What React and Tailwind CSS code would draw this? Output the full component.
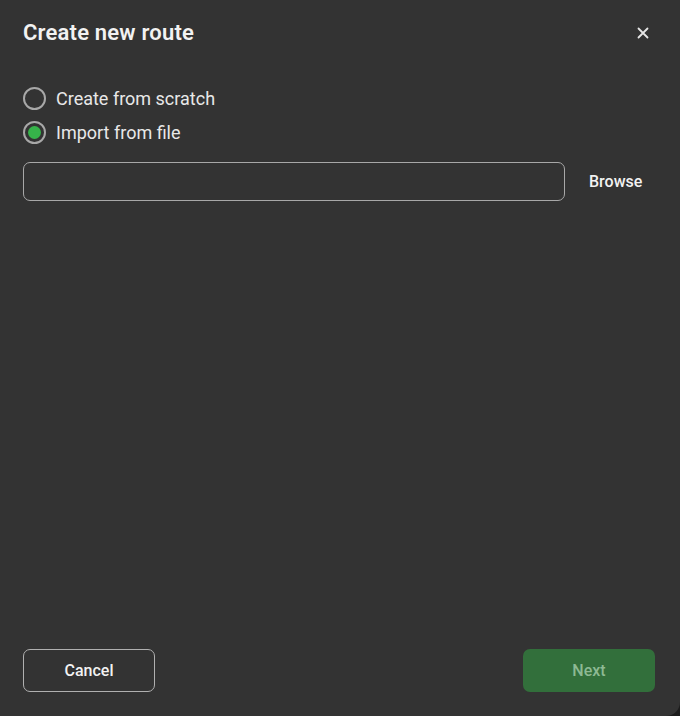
import { useState } from 'react'

export default function App() {
  const [mode, setMode] = useState('file')
  const [path, setPath] = useState('')

  const options = [
    { id: 'scratch', label: 'Create from scratch' },
    { id: 'file', label: 'Import from file' },
  ]

  return (
    <div className="w-[680px] h-[716px] bg-[#1c1c1c]" style={{ fontFamily: 'Roboto, "Liberation Sans", sans-serif' }}>
      <div className="w-full h-full bg-[#333333] rounded-br-[14px] flex flex-col pl-[23px] pr-[25px] pt-[20px] pb-[24px] text-white">
        {/* Header */}
        <div className="flex items-center justify-between h-[24px]">
          <h1 className="text-[22px] font-semibold tracking-[0.2px] text-[#f2f2f2]">Create new route</h1>
          <button className="w-[16px] h-[16px] mr-[4px] mt-[2px] flex items-center justify-center text-[#e6e6e6]">
            <svg width="12" height="12" viewBox="0 0 12 12" fill="none" stroke="currentColor" strokeWidth="1.8" strokeLinecap="round">
              <path d="M1.5 1.5l9 9M10.5 1.5l-9 9" />
            </svg>
          </button>
        </div>

        {/* Options */}
        <div className="mt-[43px] flex flex-col gap-[12px]">
          {options.map((o) => (
            <label key={o.id} className="flex items-center gap-[10px] h-[22px] cursor-pointer" onClick={() => setMode(o.id)}>
              <span className="w-[23px] h-[23px] rounded-full border-2 border-[#a8a8a8] flex items-center justify-center">
                {mode === o.id && <span className="w-[13px] h-[13px] rounded-full bg-[#36b34a]" />}
              </span>
              <span className="text-[18px] text-[#e8e8e8]">{o.label}</span>
            </label>
          ))}
        </div>

        {/* File input */}
        <div className="mt-[19px] flex items-center">
          <input
            value={path}
            onChange={(e) => setPath(e.target.value)}
            className="w-[542px] h-[39px] rounded-[7px] border border-[#a8a8a8] bg-transparent px-3 text-[15px] outline-none"
          />
          <button className="ml-[24px] text-[16px] font-medium text-[#f2f2f2]">Browse</button>
        </div>

        <div className="flex-1" />

        {/* Footer */}
        <div className="flex items-center justify-between">
          <button className="w-[132px] h-[43px] rounded-[7px] border border-[#b0b0b0] text-[16px] font-medium text-[#f2f2f2]">
            Cancel
          </button>
          <button className="w-[132px] h-[43px] rounded-[7px] bg-[#326f3b] text-[16px] font-medium text-[#8db993]">
            Next
          </button>
        </div>
      </div>
    </div>
  )
}
